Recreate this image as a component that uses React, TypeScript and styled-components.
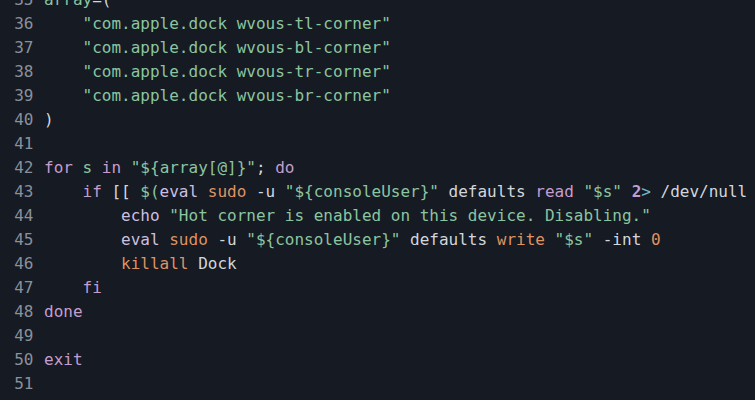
import React from "react";
import styled, { createGlobalStyle } from "styled-components";

const Global = createGlobalStyle`
  html, body {
    margin: 0;
    padding: 0;
    background: #151a23;
    overflow: hidden;
  }
  #root {
    width: 755px;
    height: 400px;
    overflow: hidden;
  }
`;

type Kind = "plain" | "str" | "kw" | "builtin" | "cmd" | "num" | "op";

const colors: Record<Kind, string> = {
  plain: "#d3d6dc",
  str: "#8bc5a0",
  kw: "#c59ecf",
  builtin: "#cdbfe0",
  cmd: "#df9362",
  num: "#c59ecf",
  op: "#6fb6c8",
};

const Editor = styled.div`
  width: 755px;
  height: 400px;
  background: #151a23;
  overflow: hidden;
  font-family: "DejaVu Sans Mono", "Liberation Mono", monospace;
  font-size: 16px;
`;

const Lines = styled.div`
  display: flex;
  flex-direction: column;
  margin-top: -12px;
`;

const Line = styled.div`
  display: grid;
  grid-template-columns: 33.5px 1fr;
  column-gap: 10.5px;
  height: 24px;
  line-height: 24px;
  white-space: pre;
`;

const LineNo = styled.span`
  text-align: right;
  color: #8a909a;
`;

const Code = styled.span`
  color: ${colors.plain};
  overflow: hidden;
`;

const Tok = styled.span<{ $k: Kind }>`
  color: ${(p) => colors[p.$k]};
  font-weight: ${(p) => (p.$k === "num" ? 700 : 400)};
`;

type T = [Kind, string];

const src: { n: number; t: T[] }[] = [
  { n: 35, t: [["str", "array"], ["plain", "=("]] },
  { n: 36, t: [["plain", "    "], ["str", '"com.apple.dock wvous-tl-corner"']] },
  { n: 37, t: [["plain", "    "], ["str", '"com.apple.dock wvous-bl-corner"']] },
  { n: 38, t: [["plain", "    "], ["str", '"com.apple.dock wvous-tr-corner"']] },
  { n: 39, t: [["plain", "    "], ["str", '"com.apple.dock wvous-br-corner"']] },
  { n: 40, t: [["plain", ")"]] },
  { n: 41, t: [] },
  {
    n: 42,
    t: [
      ["kw", "for"],
      ["plain", " "],
      ["str", "s"],
      ["plain", " "],
      ["kw", "in"],
      ["plain", " "],
      ["str", '"${array[@]}"'],
      ["plain", "; "],
      ["kw", "do"],
    ],
  },
  {
    n: 43,
    t: [
      ["plain", "    "],
      ["kw", "if"],
      ["plain", " [[ "],
      ["str", "$("],
      ["builtin", "eval"],
      ["plain", " "],
      ["cmd", "sudo"],
      ["plain", " -u "],
      ["str", '"${consoleUser}"'],
      ["plain", " defaults "],
      ["kw", "read"],
      ["plain", " "],
      ["str", '"$s"'],
      ["plain", " "],
      ["num", "2"],
      ["op", ">"],
      ["plain", " /dev/null ]]; "],
    ],
  },
  {
    n: 44,
    t: [
      ["plain", "        "],
      ["builtin", "echo"],
      ["plain", " "],
      ["str", '"Hot corner is enabled on this device. Disabling."'],
    ],
  },
  {
    n: 45,
    t: [
      ["plain", "        "],
      ["builtin", "eval"],
      ["plain", " "],
      ["cmd", "sudo"],
      ["plain", " -u "],
      ["str", '"${consoleUser}"'],
      ["plain", " defaults "],
      ["cmd", "write"],
      ["plain", " "],
      ["str", '"$s"'],
      ["plain", " -int "],
      ["cmd", "0"],
    ],
  },
  { n: 46, t: [["plain", "        "], ["cmd", "killall"], ["plain", " Dock"]] },
  { n: 47, t: [["plain", "    "], ["kw", "fi"]] },
  { n: 48, t: [["kw", "done"]] },
  { n: 49, t: [] },
  { n: 50, t: [["kw", "exit"]] },
  { n: 51, t: [] },
  { n: 52, t: [] },
];

export default function App() {
  return (
    <>
      <Global />
      <Editor>
        <Lines>
          {src.map((l) => (
            <Line key={l.n}>
              <LineNo>{l.n}</LineNo>
              <Code>
                {l.t.map(([k, s], i) => (
                  <Tok key={i} $k={k}>
                    {s}
                  </Tok>
                ))}
              </Code>
            </Line>
          ))}
        </Lines>
      </Editor>
    </>
  );
}
